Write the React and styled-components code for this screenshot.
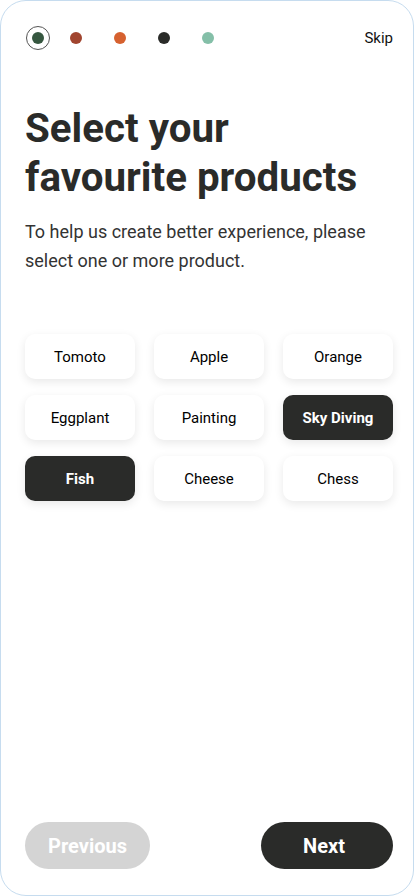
import React, { useState } from 'react';
import styled, { createGlobalStyle } from 'styled-components';

const GlobalStyle = createGlobalStyle`
    * { box-sizing: border-box; }
    body {
        margin: 0;
        background: #ffffff;
        font-family: Roboto, 'Liberation Sans', sans-serif;
    }
`;

const Screen = styled.div`
    width: 414px;
    height: 896px;
    border: 1px solid #c6dcef;
    border-radius: 26px;
    background: #fff;
    padding: 24px 20px 26px 24px;
    display: flex;
    flex-direction: column;
    overflow: hidden;
`;

const TopBar = styled.div`
    display: flex;
    align-items: center;
    justify-content: space-between;
    height: 26px;
`;

const Dots = styled.div`
    display: flex;
    align-items: center;
    gap: 32px;
`;

const Dot = styled.span`
    width: 12px;
    height: 12px;
    border-radius: 50%;
    background: ${p => p.color};
`;

const Ring = styled.span`
    width: 24px;
    height: 24px;
    border-radius: 50%;
    border: 1px solid #555;
    display: flex;
    align-items: center;
    justify-content: center;
    margin-right: -12px;
    margin-left: 1px;
`;

const Skip = styled.button`
    border: none;
    background: none;
    padding: 0;
    font-family: inherit;
    font-size: 15px;
    color: #111;
    cursor: pointer;
`;

const Title = styled.h1`
    margin: 53px 0 0;
    font-size: 40.3px;
    line-height: 49px;
    font-weight: 700;
    color: #2a2b29;
`;

const Subtitle = styled.p`
    margin: 15px 0 0;
    font-size: 18px;
    line-height: 29px;
    color: #333;
    padding-right: 10px;
`;

const ChipGrid = styled.div`
    margin-top: 59px;
    display: grid;
    grid-template-columns: 110px 110px 110px;
    row-gap: 16px;
    justify-content: space-between;
`;

const Chip = styled.button`
    height: 45px;
    border: none;
    border-radius: 10px;
    font-family: inherit;
    font-size: 15px;
    font-weight: ${p => (p.selected ? 700 : 400)};
    cursor: pointer;
    background: ${p => (p.selected ? '#2a2b29' : '#fff')};
    color: ${p => (p.selected ? '#fff' : '#000')};
    box-shadow: 0 3px 10px rgba(0, 0, 0, 0.09);
`;

const Footer = styled.div`
    margin-top: auto;
    display: flex;
    justify-content: space-between;
`;

const NavButton = styled.button`
    height: 47px;
    width: ${p => p.width}px;
    border: none;
    border-radius: 24px;
    padding: ${p => (p.disabled ? '0' : '0 6px 0 0')};
    font-family: inherit;
    font-size: 20px;
    font-weight: 700;
    color: #fff;
    background: ${p => (p.disabled ? '#d4d4d4' : '#2a2b29')};
    cursor: ${p => (p.disabled ? 'default' : 'pointer')};
`;

const dotColors = ['#a1452f', '#d6612f', '#2a2b29', '#84bfa8'];

const products = [
    'Tomoto',
    'Apple',
    'Orange',
    'Eggplant',
    'Painting',
    'Sky Diving',
    'Fish',
    'Cheese',
    'Chess',
];

const App = () => {
    const [selected, setSelected] = useState(['Sky Diving', 'Fish']);

    const toggle = name => {
        setSelected(s => (s.includes(name) ? s.filter(n => n !== name) : [...s, name]));
    };

    return (
        <>
            <GlobalStyle />
            <Screen>
                <TopBar>
                    <Dots>
                        <Ring>
                            <Dot color='#365740' />
                        </Ring>
                        {dotColors.map(c => (
                            <Dot key={c} color={c} />
                        ))}
                    </Dots>
                    <Skip>Skip</Skip>
                </TopBar>

                <Title>
                    Select your
                    <br />
                    favourite products
                </Title>
                <Subtitle>To help us create better experience, please select one or more product.</Subtitle>

                <ChipGrid>
                    {products.map(name => (
                        <Chip key={name} selected={selected.includes(name)} onClick={() => toggle(name)}>
                            {name}
                        </Chip>
                    ))}
                </ChipGrid>

                <Footer>
                    <NavButton width={125} disabled>
                        Previous
                    </NavButton>
                    <NavButton width={132}>Next</NavButton>
                </Footer>
            </Screen>
        </>
    );
};

export default App;
